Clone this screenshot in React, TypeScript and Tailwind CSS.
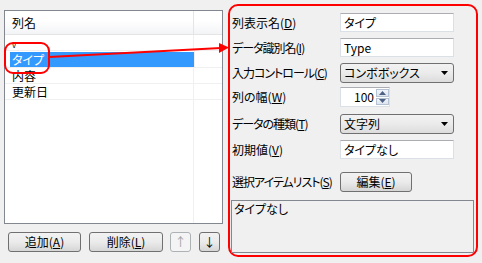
import React from "react";

const U = ({ c }: { c: string }) => <span className="underline underline-offset-[1px]">{c}</span>;

const Label = ({ t, k, tight }: { t: string; k: string; tight?: boolean }) => (
  <div className={"w-[110px] shrink-0 pl-[2px] leading-[14px] whitespace-nowrap" + (tight ? " tracking-[-1px]" : "")}>
    {t}(<U c={k} />)
  </div>
);

const TextBox = ({ v }: { v: string }) => (
  <div className="w-[114px] h-[19px] bg-white border border-[#dbdfe6] border-t-[#abadb3] pl-[3px] flex items-center leading-[14px]">
    {v}
  </div>
);

const Combo = ({ v }: { v: string }) => (
  <div className="w-[114px] h-[20px] rounded-[3px] border border-[#707070] bg-gradient-to-b from-[#f2f2f2] via-[#ebebeb] to-[#dcdcdc] flex items-center pl-[3px] pr-[4px] leading-[14px]">
    <span className="flex-1">{v}</span>
    <svg width="8" height="5" viewBox="0 0 8 5"><path d="M0 0 H7 L3.5 4 Z" fill="#000" /></svg>
  </div>
);

const Btn = ({ children, w, disabled }: { children: React.ReactNode; w: string; disabled?: boolean }) => (
  <div
    className={
      "h-[20px] rounded-[3px] border flex items-center justify-center leading-[14px] " +
      w +
      (disabled
        ? " border-[#adb2b5] bg-[#f4f4f4] text-[#a0a0a0]"
        : " border-[#707070] bg-gradient-to-b from-[#f2f2f2] via-[#ebebeb] to-[#d6d6d6]")
    }
  >
    {children}
  </div>
);

export default function App() {
  return (
    <div
      className="w-[482px] h-[263px] bg-[#f0f0f0] flex relative overflow-hidden text-[12px] text-black [font-feature-settings:'palt']"
      style={{ fontFamily: '"Noto Sans CJK JP", "Noto Sans", sans-serif' }}
    >
      {/* Left */}
      <div className="w-[228px] shrink-0 flex flex-col">
        <div className="ml-[4px] mt-[10px] w-[219px] h-[214px] border border-[#828790] bg-white flex flex-col">
          <div className="h-[24px] flex border-b border-[#e5e5e5] bg-gradient-to-b from-white from-40% to-[#f3f4f6]">
            <div className="w-[189px] border-r border-[#e5e5e5] pl-[7px] flex items-center leading-[14px]">列名</div>
            <div className="flex-1" />
          </div>
          <div className="h-[16px] flex border-b border-[#f0f0f0]">
            <div className="w-[189px] border-r border-[#f0f0f0] pl-[7px] text-[8px] leading-[10px] pt-[5px]">v</div>
          </div>
          <div className="h-[17px] flex border-b border-[#f0f0f0]">
            <div className="w-[189px] pl-[5px] pt-[1px]">
              <div className="h-[15px] bg-[#3399ff] text-white pl-[2px] leading-[15px]">タイプ</div>
            </div>
            <div className="w-px bg-[#f0f0f0]" />
          </div>
          <div className="h-[16px] flex border-b border-[#f0f0f0]">
            <div className="w-[189px] border-r border-[#f0f0f0] pl-[7px] leading-[15px]">内容</div>
          </div>
          <div className="h-[16px] flex border-b border-[#f0f0f0]">
            <div className="w-[189px] border-r border-[#f0f0f0] pl-[7px] leading-[15px]">更新日</div>
          </div>
          <div className="flex-1 flex">
            <div className="w-[189px] border-r border-[#f0f0f0]" />
          </div>
        </div>
        <div className="mt-[8px] flex">
          <div className="ml-[8px]"><Btn w="w-[73px]">追加(<U c="A" />)</Btn></div>
          <div className="ml-[8px]"><Btn w="w-[74px]">削除(<U c="L" />)</Btn></div>
          <div className="ml-[7px]"><Btn w="w-[21px]" disabled>↑</Btn></div>
          <div className="ml-[8px]"><Btn w="w-[21px]">↓</Btn></div>
        </div>
      </div>

      {/* Right */}
      <div className="mt-[4px] w-[250px] h-[253px] border-2 border-[#ff0000] rounded-[10px] flex flex-col">
        <div className="mt-[7px] flex items-center">
          <Label t="列表示名" k="D" />
          <TextBox v="タイプ" />
        </div>
        <div className="mt-[6px] flex items-center">
          <Label t="データ識別名" k="I" tight />
          <TextBox v="Type" />
        </div>
        <div className="mt-[6px] flex items-center">
          <Label t="入力コントロール" k="C" tight />
          <Combo v="コンボボックス" />
        </div>
        <div className="mt-[4px] flex items-center">
          <Label t="列の幅" k="W" />
          <div className="w-[50px] h-[20px] bg-white border border-[#dbdfe6] border-t-[#abadb3] flex">
            <div className="w-[34px] flex items-center justify-end pr-[1px] leading-[14px]">100</div>
            <div className="w-[13px] ml-[1px] flex flex-col py-[1px] gap-[1px]">
              <div className="flex-1 border border-[#b5c2d4] bg-gradient-to-b from-[#f2f5fa] to-[#dde4ee] flex items-center justify-center">
                <svg width="7" height="4" viewBox="0 0 7 4"><path d="M0 4 L3.5 0 L7 4 Z" fill="#4d6185" /></svg>
              </div>
              <div className="flex-1 border border-[#b5c2d4] bg-gradient-to-b from-[#f2f5fa] to-[#dde4ee] flex items-center justify-center">
                <svg width="7" height="4" viewBox="0 0 7 4"><path d="M0 0 L7 0 L3.5 4 Z" fill="#4d6185" /></svg>
              </div>
            </div>
          </div>
        </div>
        <div className="mt-[7px] flex items-center">
          <Label t="データの種類" k="T" tight />
          <Combo v="文字列" />
        </div>
        <div className="mt-[6px] flex items-center">
          <Label t="初期値" k="V" />
          <TextBox v="タイプなし" />
        </div>
        <div className="mt-[13px] flex items-center">
          <Label t="選択アイテムリスト" k="S" tight />
          <Btn w="w-[72px]">編集(<U c="E" />)</Btn>
        </div>
        <div className="mt-[8px] ml-[1px] w-[243px] h-[53px] border border-[#828790] pl-[2px] pt-[1px] leading-[14px]">
          タイプなし
        </div>
      </div>

      {/* Annotations */}
      <svg className="absolute left-0 top-0 pointer-events-none" width="482" height="263" viewBox="0 0 482 263">
        <rect x="5" y="43" width="44" height="30" rx="8" fill="none" stroke="#ff0000" strokeWidth="2" />
        <line x1="49" y1="57" x2="221" y2="48" stroke="#ff0000" strokeWidth="2" />
        <path d="M219 43 L229 47.5 L219 53 Z" fill="#ff0000" />
      </svg>
    </div>
  );
}
